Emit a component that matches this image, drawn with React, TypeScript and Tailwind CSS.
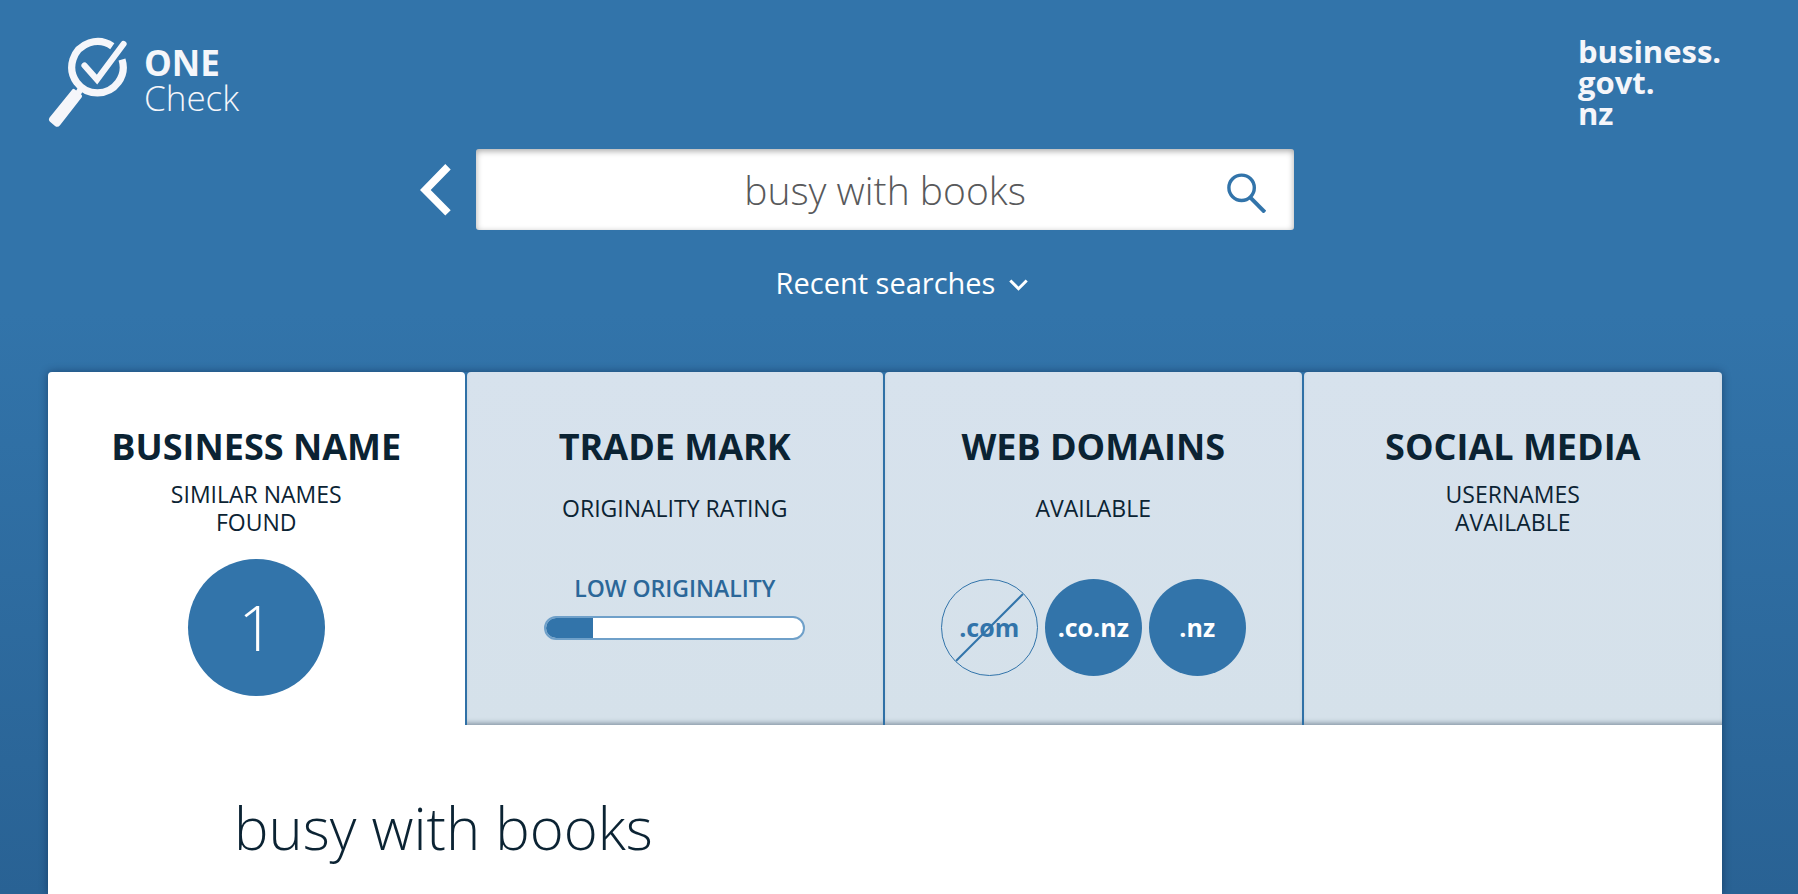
import { useState } from "react";
import type { ReactNode } from "react";

function OneCheckLogo() {
  return (
    <a href="#home" aria-label="ONE Check" className="flex items-start gap-4 text-[#f5f6fa]">
      <svg width="80" height="92" viewBox="0 0 80 92" fill="none" className="shrink-0">
        <path d="M64.3 10.2A25.7 25.7 0 1 0 74 23.5" stroke="currentColor" strokeWidth="7.2" />
        <path d="M36.5 29.5L49 43.5L75.5 8" stroke="currentColor" strokeWidth="6.2" strokeLinecap="round" />
        <path d="M34.5 50.5L29.5 58" stroke="currentColor" strokeWidth="6" />
        <path
          d="M24.5 53.2Q25.5 52.4 26.6 53.2L33.5 58.8Q34.7 60.2 33.6 61.4L12 89.3Q9.8 92 7 90L2 85.8Q0 83.8 1.6 81.4Z"
          fill="currentColor"
        />
      </svg>
      <span className="flex flex-col pt-[9px] text-[35px] leading-[35px]">
        <span className="font-bold">ONE</span>
        <span className="font-light">Check</span>
      </span>
    </a>
  );
}

function Tab({
  title,
  caption,
  active,
  onSelect,
  children,
}: {
  title: string;
  caption: ReactNode;
  active: boolean;
  onSelect: () => void;
  children?: ReactNode;
}) {
  return (
    <button
      type="button"
      role="tab"
      aria-selected={active}
      onClick={onSelect}
      className={
        "mr-[2px] flex h-[353px] cursor-pointer flex-col items-center rounded-t pt-[53px] text-center last:mr-0 " +
        (active
          ? "bg-white"
          : "bg-linear-to-b from-[#d7e2ed] to-[#d5e1ea] shadow-[inset_0_-5px_5px_-3px_rgba(60,80,100,0.5)]")
      }
    >
      <span className="text-[36px] leading-[44px] font-bold">{title}</span>
      <span className="mt-[7px] flex h-[64px] items-center text-[23px] leading-7">
        <span>{caption}</span>
      </span>
      <span className="mt-[19px] flex h-[137px] w-full flex-col items-center justify-center">{children}</span>
    </button>
  );
}

function Domain({ name, available }: { name: string; available: boolean }) {
  return (
    <span
      className={
        "relative flex size-[97px] items-center justify-center rounded-full text-[25px] font-bold " +
        (available ? "bg-[#3274aa] text-white" : "border border-[#3274aa] text-[#3274aa]")
      }
    >
      {name}
      {!available && (
        <svg viewBox="0 0 95 95" className="absolute inset-0 size-full" fill="none">
          <path d="M14 81L81 14" stroke="#3274aa" strokeWidth="2" />
        </svg>
      )}
    </span>
  );
}

export default function App() {
  const [query, setQuery] = useState("busy with books");
  const [tab, setTab] = useState(0);
  const rating = 18;

  return (
    <div className="flex min-h-screen flex-col bg-linear-to-b from-[#3274aa] from-35% to-[#296294] pr-7 font-['Open_Sans','Noto_Sans',sans-serif] text-[#0b2333]">
      <header className="px-12 text-white">
        <div className="flex h-[149px] items-start justify-between pt-9">
          <OneCheckLogo />
          <a href="#business" className="w-[144px] text-[31px] leading-[31px] font-bold text-[#f5f6fa]">
            business.
            <br />
            govt.
            <br />
            nz
          </a>
        </div>

        <form
          role="search"
          onSubmit={(e) => e.preventDefault()}
          className="relative mx-auto w-full max-w-[818px]"
        >
          <button type="button" aria-label="Back" className="absolute top-[15px] -left-14 cursor-pointer">
            <svg width="31" height="52" viewBox="0 0 31 52" fill="currentColor">
              <path d="M0 26L25.3 0L30.7 5.4L10.7 26L30.7 46.2L25.3 51.6Z" />
            </svg>
          </button>
          <div className="flex h-[81px] items-center rounded-[3px] bg-white shadow-[inset_0_2px_6px_rgba(0,0,0,0.35)]">
            <input
              type="text"
              aria-label="Name to search for"
              value={query}
              onChange={(e) => setQuery(e.target.value)}
              className="h-full min-w-0 grow pl-24 text-center text-[39px] font-light text-[#58595b] outline-none"
            />
            <button type="submit" aria-label="Search" className="flex w-24 shrink-0 cursor-pointer justify-center pt-[6px] text-[#3274aa]">
              <svg width="40" height="41" viewBox="0 0 40 41" fill="none" stroke="currentColor">
                <circle cx="15.6" cy="15.8" r="12.7" strokeWidth="3.4" />
                <path d="M23.9 25.2L38.9 40.2" strokeWidth="4" />
              </svg>
            </button>
          </div>
        </form>

        <div className="flex h-[142px] justify-center pt-[33px] pl-[34px]">
          <button type="button" className="flex h-10 cursor-pointer items-center gap-[14px] text-[29px]">
            Recent searches
            <svg width="19" height="12" viewBox="0 0 19 12" fill="none" className="mt-1">
              <path d="M1.3 1.5L9.5 9.7L17.7 1.5" stroke="currentColor" strokeWidth="3" />
            </svg>
          </button>
        </div>
      </header>

      <main className="mx-12 flex grow flex-col rounded-t shadow-[0_0_8px_rgba(0,20,50,0.45)]">
        <div role="tablist" className="grid grid-cols-4 rounded-t bg-[#2f70a6]">
          <Tab
            title="BUSINESS NAME"
            caption={
              <>
                SIMILAR NAMES
                <br />
                FOUND
              </>
            }
            active={tab === 0}
            onSelect={() => setTab(0)}
          >
            <span className="flex size-[137px] items-center justify-center rounded-full bg-[#3274aa] text-[62px] font-light text-white">
              1
            </span>
          </Tab>
          <Tab title="TRADE MARK" caption="ORIGINALITY RATING" active={tab === 1} onSelect={() => setTab(1)}>
            <span className="-mt-12 text-[23px] leading-10 font-semibold text-[#2b6799]">LOW ORIGINALITY</span>
            <span className="mt-2 flex h-6 w-[261px] overflow-hidden rounded-full border-2 border-[#6fa0c9] bg-white">
              <span className="bg-[#3274aa]" style={{ width: `${rating}%` }} />
            </span>
          </Tab>
          <Tab title="WEB DOMAINS" caption="AVAILABLE" active={tab === 2} onSelect={() => setTab(2)}>
            <span className="flex gap-[7px]">
              <Domain name=".com" available={false} />
              <Domain name=".co.nz" available />
              <Domain name=".nz" available />
            </span>
          </Tab>
          <Tab
            title="SOCIAL MEDIA"
            caption={
              <>
                USERNAMES
                <br />
                AVAILABLE
              </>
            }
            active={tab === 3}
            onSelect={() => setTab(3)}
          />
        </div>
        <section className="grow bg-white px-[186px] pt-[67px]">
          <h1 className="text-[58px] leading-[72px] font-light">{query}</h1>
        </section>
      </main>
    </div>
  );
}
